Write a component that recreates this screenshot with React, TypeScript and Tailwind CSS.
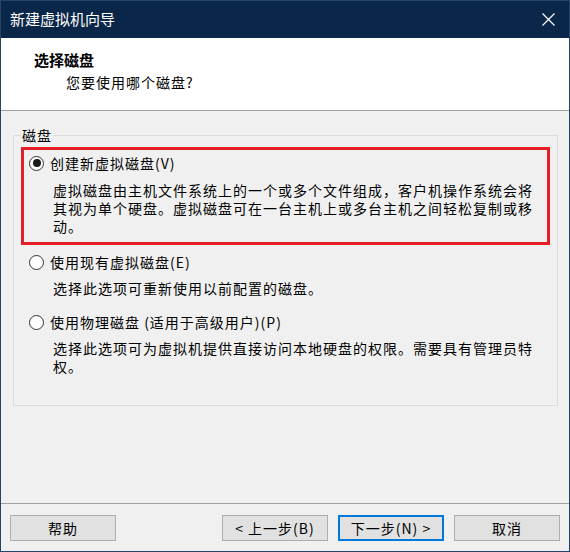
import React from 'react'

const font = { fontFamily: '"Noto Sans CJK SC", "Noto Sans", sans-serif' }

function Radio({ checked }: { checked?: boolean }) {
  return (
    <span className="flex h-[15px] w-[15px] shrink-0 items-center justify-center rounded-full border border-[#333333] bg-white">
      {checked && <span className="h-[8px] w-[8px] rounded-full bg-[#1a1a1a]" />}
    </span>
  )
}

interface OptionProps {
  label: string
  desc: string[]
  checked?: boolean
  descGap: string
}

function Option({ label, desc, checked, descGap }: OptionProps) {
  return (
    <div>
      <label className="flex h-[20px] items-center gap-[6px]">
        <Radio checked={checked} />
        <span className="text-[14px] tracking-[1px] leading-[20px] text-black">{label}</span>
      </label>
      <div className={`${descGap} ml-[24px] text-[14px] tracking-[1px] leading-[18px] text-black`}>
        {desc.map((line) => (
          <div key={line}>{line}</div>
        ))}
      </div>
    </div>
  )
}

function Button({ children, primary }: { children: React.ReactNode; primary?: boolean }) {
  return (
    <button
      className={`h-[26px] w-[106px] bg-[#e1e1e1] text-[14px] tracking-[1px] text-black ${
        primary ? 'border-2 border-[#0078d7]' : 'border border-[#adadad]'
      }`}
    >
      {children}
    </button>
  )
}

export default function App() {
  return (
    <div
      className="flex h-[552px] w-[570px] flex-col border border-[#24446b] bg-[#f0f0f0] select-none"
      style={font}
    >
      {/* title bar */}
      <div className="flex h-[37px] shrink-0 items-center justify-between bg-[#0a2649] pl-[9px] pr-[14px]">
        <span className="text-[15px] text-white">新建虚拟机向导</span>
        <svg width="13" height="13" viewBox="0 0 13 13">
          <path d="M0.5 0.5 L12.5 12.5 M12.5 0.5 L0.5 12.5" stroke="#ffffff" strokeWidth="1.2" />
        </svg>
      </div>

      {/* header */}
      <div className="h-[73px] shrink-0 border-b border-[#a0a0a0] bg-white">
        <div className="pl-[33px] pt-[12px] text-[15px] font-bold leading-[20px] text-black">选择磁盘</div>
        <div className="pl-[65px] pt-[2px] text-[14px] tracking-[1px] leading-[20px] text-black">您要使用哪个磁盘?</div>
      </div>

      {/* body */}
      <div className="flex-1">
        <fieldset className="ml-[12px] mr-[11px] mt-[15px] border border-[#dcdcdc] px-[7px] pb-[30px] pt-[3px]">
          <legend className="px-[1px] text-[14px] tracking-[1px] leading-[18px] text-black">磁盘</legend>

          <div className="border-[3px] border-[#e61e28] pb-[7px] pl-[5px] pt-[3px]">
            <Option
              checked
              label="创建新虚拟磁盘(V)"
              descGap="mt-[8px]"
              desc={[
                '虚拟磁盘由主机文件系统上的一个或多个文件组成，客户机操作系统会将',
                '其视为单个硬盘。虚拟磁盘可在一台主机上或多台主机之间轻松复制或移',
                '动。',
              ]}
            />
          </div>

          <div className="pl-[8px]">
            <div className="mt-[7px]">
              <Option label="使用现有虚拟磁盘(E)" descGap="mt-[7px]" desc={['选择此选项可重新使用以前配置的磁盘。']} />
            </div>
            <div className="mt-[15px]">
              <Option
                label="使用物理磁盘 (适用于高级用户)(P)"
                descGap="mt-[7px]"
                desc={['选择此选项可为虚拟机提供直接访问本地硬盘的权限。需要具有管理员特', '权。']}
              />
            </div>
          </div>
        </fieldset>
      </div>

      {/* footer */}
      <div className="flex h-[48px] shrink-0 items-start border-t border-[#a0a0a0] px-[9px] pt-[11px]">
        <Button>帮助</Button>
        <div className="ml-auto flex gap-[10px]">
          <Button>&lt; 上一步(B)</Button>
          <Button primary>下一步(N) &gt;</Button>
          <Button>取消</Button>
        </div>
      </div>
    </div>
  )
}
